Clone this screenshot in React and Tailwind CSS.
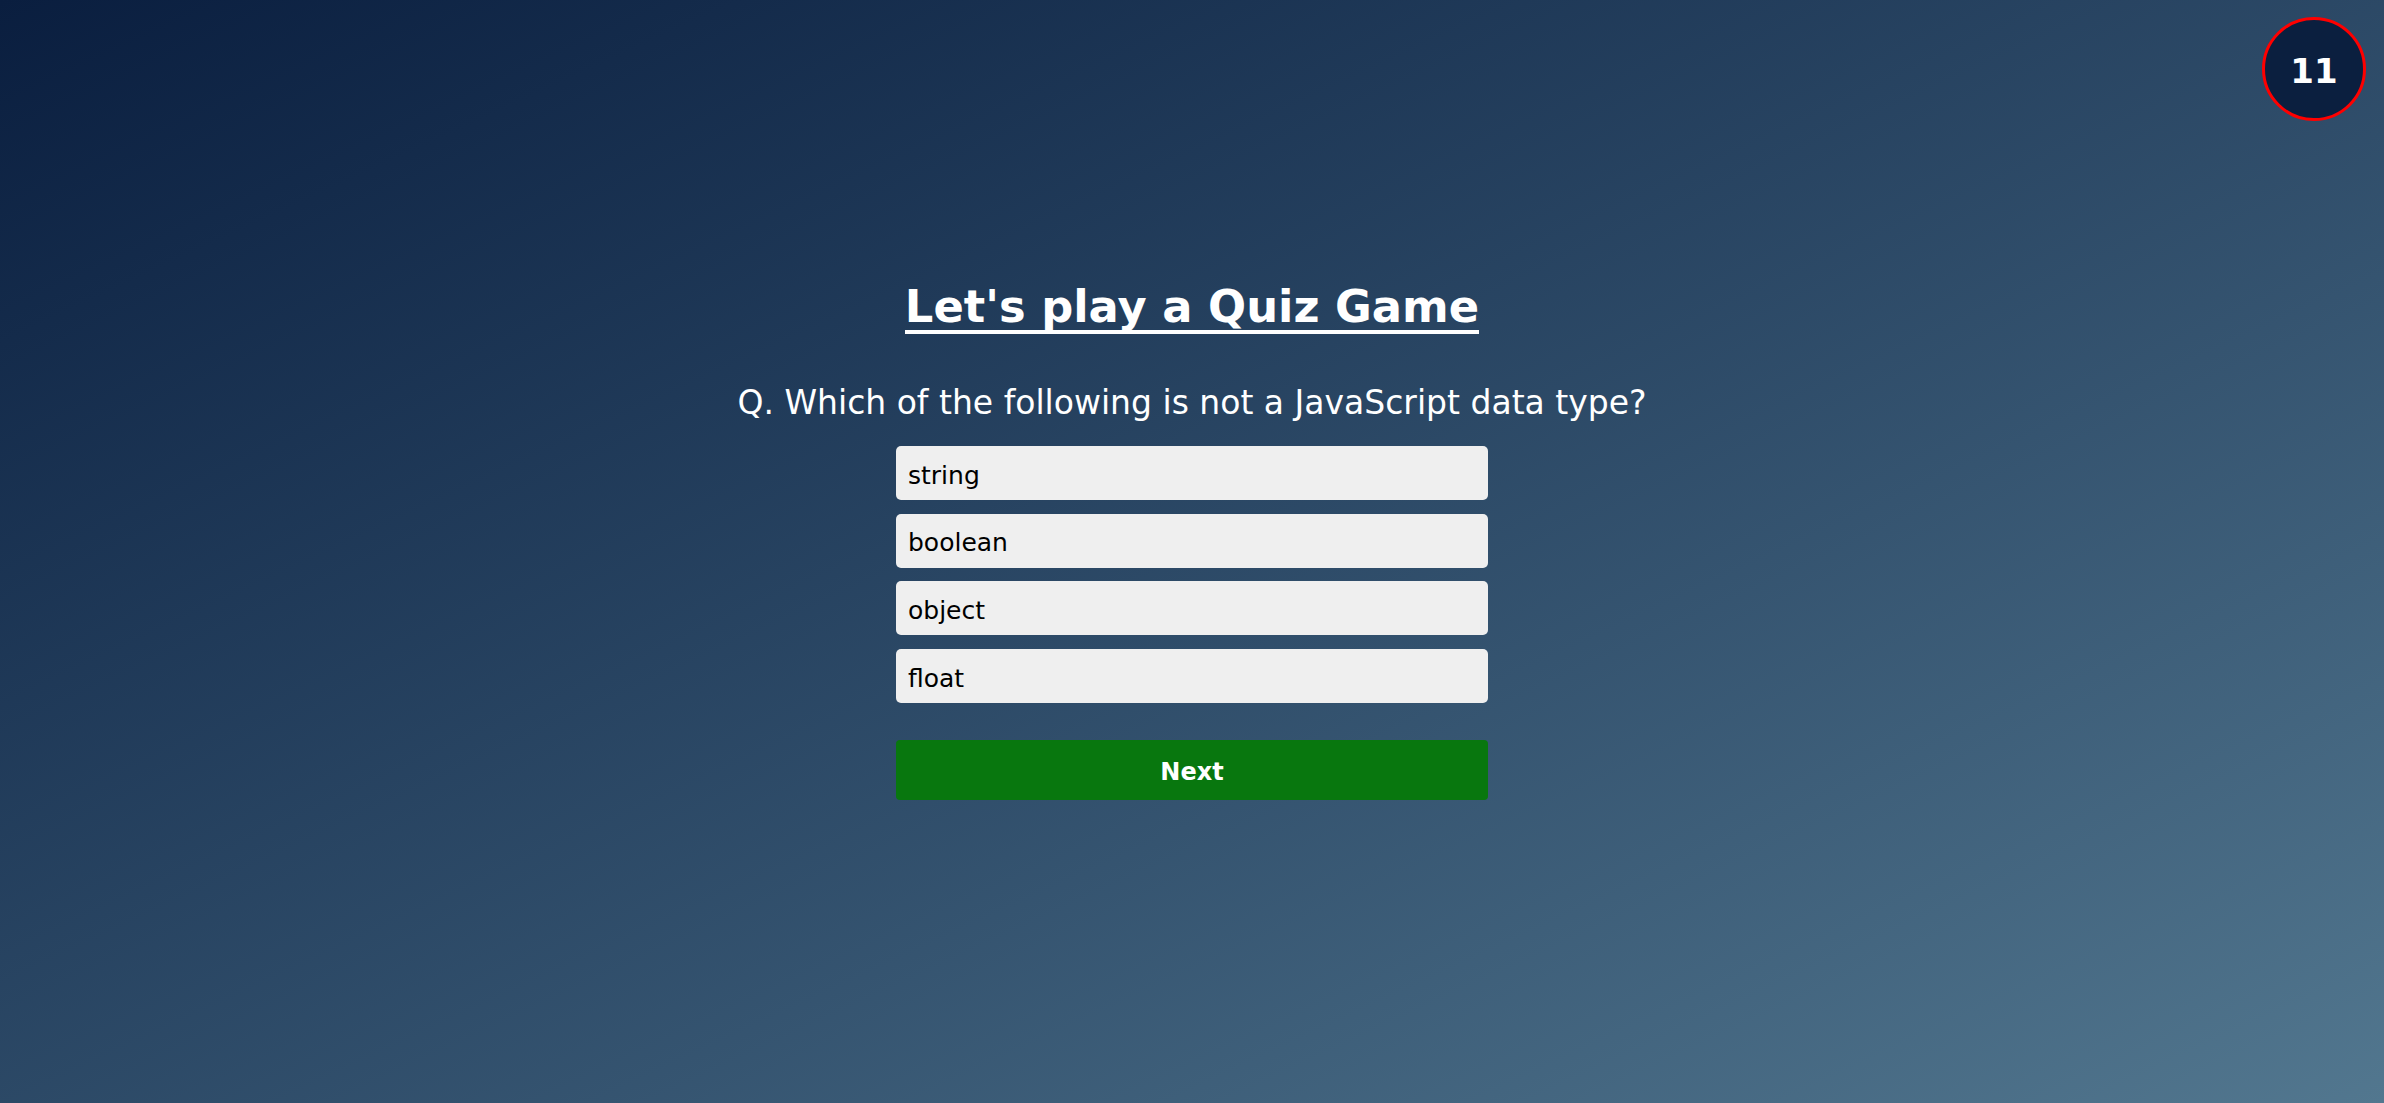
import React, { useState } from 'react';

const question = {
  text: 'Which of the following is not a JavaScript data type?',
  options: ['string', 'boolean', 'object', 'float'],
};

const App = () => {
  const [selected, setSelected] = useState(null);

  return (
    <div className="relative min-h-screen w-full bg-gradient-to-br from-[#0a1e3f] to-[#52778f] font-['DejaVu_Sans',Verdana,sans-serif] text-white">
      <div className="absolute top-[17px] right-[18px] flex h-[104px] w-[104px] items-center justify-center rounded-full border-[3px] border-[#f00] bg-[#0b1f3f] pt-[4px] text-[34px] font-bold leading-[normal]">
        11
      </div>

      <div className="flex flex-col items-center pt-[283px]">
        <h1 className="inline-block border-b-4 border-white text-[44.8px] font-bold leading-[47px]">
          Let's play a Quiz Game
        </h1>

        <p className="mt-[49px] text-[33px] leading-[normal]">Q. {question.text}</p>

        <div className="mt-[24px] flex w-[592px] flex-col gap-[13.7px]">
          {question.options.map((opt, i) => (
            <button
              key={opt}
              onClick={() => setSelected(i)}
              className={`h-[54px] rounded-[5px] pl-[12px] pt-[4px] text-left text-[25px] leading-[normal] text-black ${
                selected === i ? 'bg-[#dcdcdc]' : 'bg-[#efefef]'
              }`}
            >
              {opt}
            </button>
          ))}
        </div>

        <button className="mt-[37px] flex h-[60px] w-[592px] items-center justify-center rounded-[4px] bg-[#08770e] pt-[3px] text-[24px] font-bold leading-[normal] text-white">
          Next
        </button>
      </div>
    </div>
  );
};

export default App;
